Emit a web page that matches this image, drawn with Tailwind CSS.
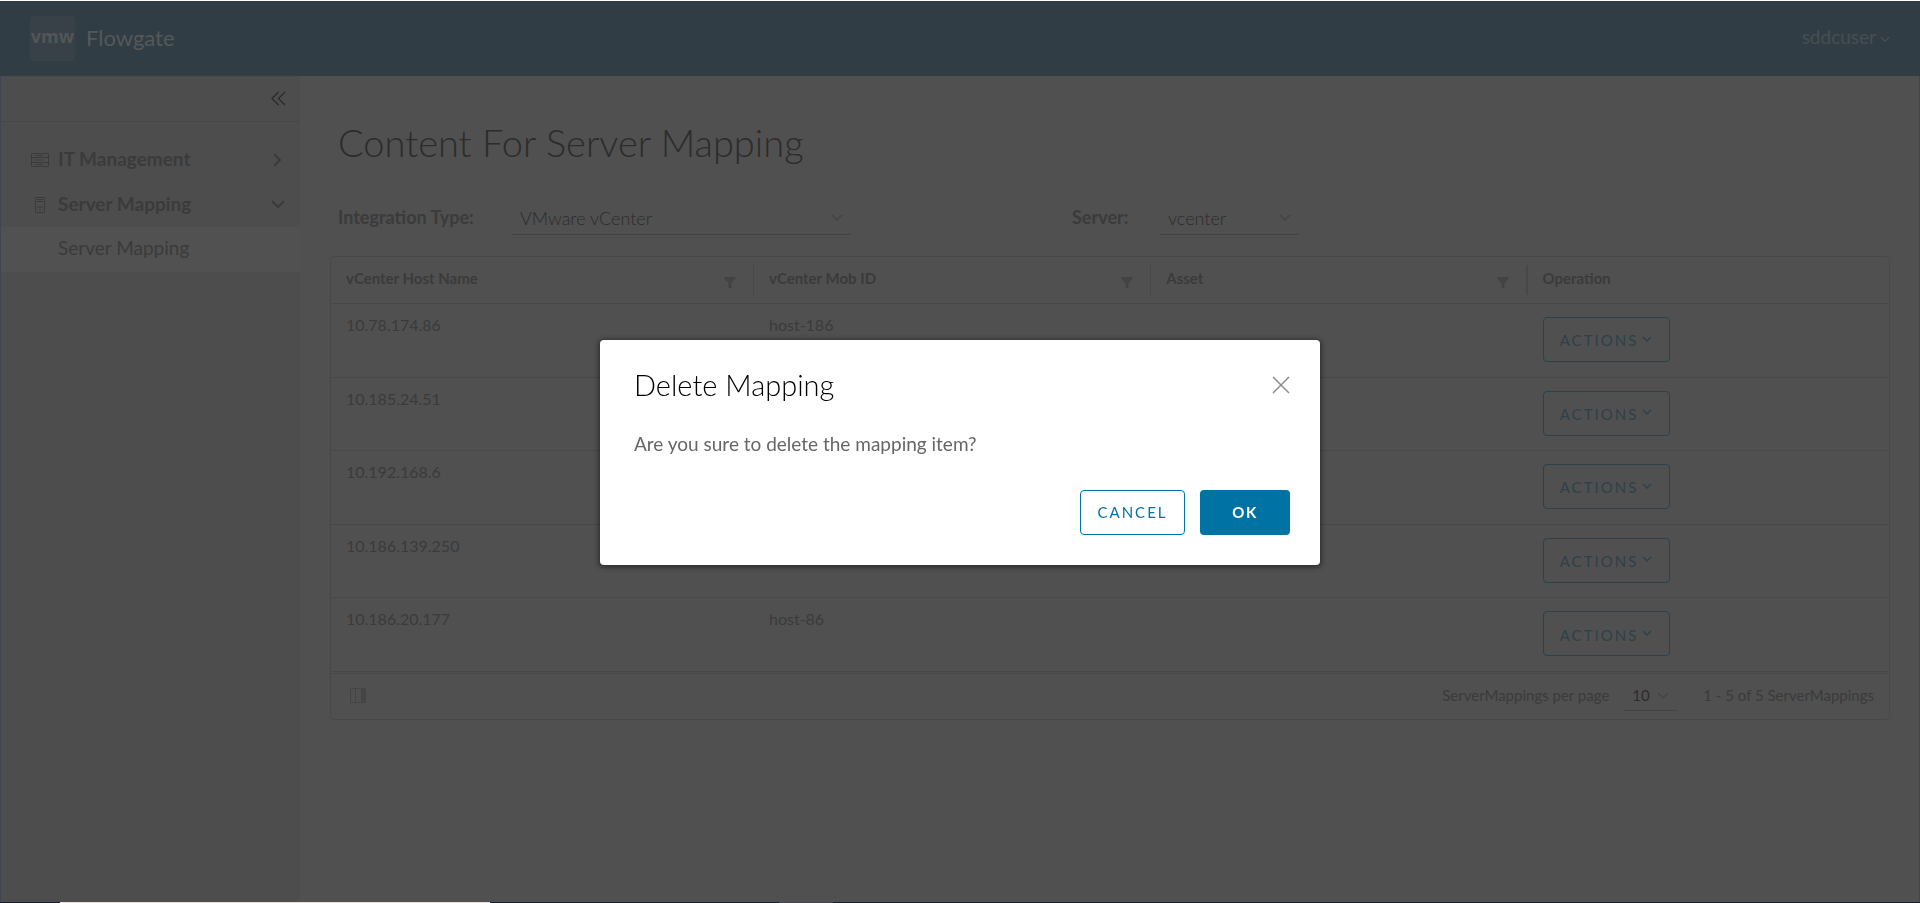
<!DOCTYPE html>
<html lang="en">
<head>
<meta charset="utf-8">
<meta name="viewport" content="width=device-width, initial-scale=1">
<title>Flowgate</title>
<script src="https://cdn.jsdelivr.net/npm/@tailwindcss/browser@4"></script>
</head>
<body class="flex min-h-screen flex-col border-t border-white bg-[#505050] font-['Lato',sans-serif] text-[#3b3b3b]">
<svg class="hidden" aria-hidden="true">
  <symbol id="chev" viewBox="0 0 12 8"><path d="M1 1l5 5 5-5" fill="none" stroke="currentColor" stroke-width="1.5"/></symbol>
  <symbol id="funnel" viewBox="0 0 12 11"><path d="M0 0h12v1L7.500 6v5h-3V6L0 1z" fill="currentColor"/></symbol>
</svg>

<header class="flex h-[75px] items-center bg-[#313d45] pl-[30px] pr-[30px]">
  <div class="flex size-[45px] items-center justify-center rounded bg-[#384147] pb-1 font-['Open_Sans',sans-serif] text-[18px] font-bold text-[#535657]">vmw</div>
  <a href="#" class="ml-[11px] pb-0.5 text-[22px] text-[#54585a]">Flowgate</a>
  <button class="ml-auto flex items-center gap-1 pb-0.5 text-[19px] text-[#474e52]">sddcuser <svg class="mt-1 h-[7px] w-[10px]"><use href="#chev"/></svg></button>
</header>

<div class="flex flex-1 border-x border-[#404554]">
  <nav class="w-[299px] shrink-0 bg-[#4d4d4d] text-[19px]">
    <div class="flex h-[46px] items-center justify-end border-b border-[#474747] pr-[14px]">
      <button aria-label="Collapse" class="text-[#2b2b2b]"><svg class="size-[15px]" viewBox="0 0 15 15" fill="none" stroke="currentColor" stroke-width="1.300"><path d="M7.500 1L1 7.500 7.500 14M14 1L7.500 7.500 14 14"/></svg></button>
    </div>
    <div class="pt-[15px]">
      <button class="flex h-[45px] w-full items-center pl-[30px] pr-[15px] font-bold">
        <svg class="mr-[9px] h-[14px] w-[18px]" viewBox="0 0 18 14" fill="none" stroke="currentColor"><path d="M.5.5h17v13H.5zM.5 4.500h17M.5 9.500h17M5 2.500h7M5 11.500h7"/><path d="M3 7h10" stroke-width="2" opacity=".5"/></svg>
        IT Management
        <svg class="ml-auto mr-[3px] h-[14px] w-[9px]" viewBox="0 0 9 14" fill="none" stroke="currentColor" stroke-width="2"><path d="M1 1l6 6-6 6"/></svg>
      </button>
      <button class="flex h-[45px] w-full items-center pl-[34px] pr-[15px] font-bold">
        <svg class="mr-[13px] h-4 w-[10px]" viewBox="0 0 10 16" fill="none" stroke="currentColor"><path d="M.5.5h9v15h-9zM2 2.500h6M2 4.500h6M4 13h2"/><path d="M2.500 10h5" stroke-width="2" opacity=".5"/></svg>
        Server Mapping
        <svg class="ml-auto h-[9px] w-[14px]" viewBox="0 0 14 9" fill="none" stroke="currentColor" stroke-width="2"><path d="M1 1l6 6 6-6"/></svg>
      </button>
      <a href="#" class="flex h-[45px] items-center bg-[#515151] pl-[57px] pb-0.5">Server Mapping</a>
    </div>
  </nav>

  <main class="min-w-0 flex-1 pt-11 pr-[29px] pl-[30px]">
    <h1 class="pl-2 text-[38px] leading-[44px] font-light text-[#2c2c2c]">Content For Server Mapping</h1>
    <form class="mt-[35px] flex h-[36px] items-center pl-2 text-[18px]">
      <label for="type" class="w-[174px] font-bold">Integration Type:</label>
      <div class="relative w-[339px]">
        <select id="type" class="h-[36px] w-full appearance-none border-b border-[#444] pl-2 pt-1 font-light text-[#2c2c2c]"><option>VMware vCenter</option></select>
        <svg class="pointer-events-none absolute right-2 top-[15px] h-2 w-3 text-[#444]"><use href="#chev"/></svg>
      </div>
      <label for="server" class="ml-[221px] w-[88px] font-bold">Server:</label>
      <div class="relative w-[139px]">
        <select id="server" class="h-[36px] w-full appearance-none border-b border-[#444] pl-2 pt-1 font-light text-[#2c2c2c]"><option>vcenter</option></select>
        <svg class="pointer-events-none absolute right-2 top-[15px] h-2 w-3 text-[#444]"><use href="#chev"/></svg>
      </div>
    </form>

    <section class="mt-[21px] rounded border border-[#484848]">
      <table class="h-[415px] w-full table-fixed border-separate border-spacing-0 text-left">
        <thead>
          <tr class="h-[47px] text-[15px]">
            <th class="w-[27.15%] border-b border-[#484848] p-0"><div class="flex h-[30px] items-center border-r border-[#484848] pr-[17px] pb-1 pl-[15px]">vCenter Host Name<button type="button" aria-label="Filter host name" class="ml-auto mt-2 text-[#434343]"><svg class="h-[11px] w-3"><use href="#funnel"/></svg></button></div></th>
            <th class="w-[25.5%] border-b border-[#484848] p-0"><div class="flex h-[30px] items-center border-r border-[#484848] pr-[17px] pb-1 pl-[15px]">vCenter Mob ID<button type="button" aria-label="Filter Mob ID" class="ml-auto mt-2 text-[#434343]"><svg class="h-[11px] w-3"><use href="#funnel"/></svg></button></div></th>
            <th class="w-[24.15%] border-b border-[#484848] p-0"><div class="flex h-[30px] items-center border-r-2 border-[#484848] pr-[17px] pb-1 pl-[15px]">Asset<button type="button" aria-label="Filter asset" class="ml-auto mt-2 text-[#434343]"><svg class="h-[11px] w-3"><use href="#funnel"/></svg></button></div></th>
            <th class="border-b border-[#484848] p-0"><div class="flex h-[30px] items-center pb-1 pl-[15px]">Operation</div></th>
          </tr>
        </thead>
        <tbody id="rows"></tbody>
      </table>
      <footer class="mt-px flex h-[46px] items-center border-t border-[#484848] pr-[15px] pb-0.5 pl-[19px] text-[15px]">
        <button aria-label="Columns" class="text-[#454545]"><svg class="h-[15px] w-4" viewBox="0 0 16 15"><path d="M.5.5h15v14H.5zM5.500.5v14" fill="none" stroke="currentColor"/><path d="M11 0h5v15h-5z" fill="currentColor"/></svg></button>
        <label for="size" class="ml-auto mr-[15px]">ServerMappings per page</label>
        <div class="relative mr-[26px] w-[53px]">
          <select id="size" class="h-[30px] w-full appearance-none border-b border-[#444] pl-2 text-[#2c2c2c]"><option>10</option></select>
          <svg class="pointer-events-none absolute right-2 top-[11px] h-2 w-3 text-[#444]"><use href="#chev"/></svg>
        </div>
        <span>1 - 5 of 5 ServerMappings</span>
      </footer>
    </section>
  </main>
</div>

<div class="flex h-px bg-[#1a1d2b]"><span class="ml-[60px] w-[430px] bg-[#e6e0df]"></span><span class="ml-[289px] w-[54px] bg-[#45454d]"></span></div>

<div class="fixed inset-0 flex items-center justify-center pt-0.5">
  <div role="dialog" aria-labelledby="dlg" class="flex w-[720px] flex-col rounded bg-white pt-[27px] pr-[30px] pb-[30px] pl-[34px] shadow-[0_1px_4px_2px_rgba(30,30,30,0.6)]">
    <div class="flex items-center justify-between">
      <h2 id="dlg" class="text-[29px] leading-9 font-light text-black">Delete Mapping</h2>
      <button aria-label="Close" class="text-[#8c8c8c]"><svg class="size-[18px]" viewBox="0 0 18 18" fill="none" stroke="currentColor" stroke-width="1.500"><path d="M1 1l16 16M17 1L1 17"/></svg></button>
    </div>
    <p class="mt-[29px] text-[19px] leading-6 text-[#666]">Are you sure to delete the mapping item?</p>
    <div class="mt-[34px] flex justify-end gap-[15px]">
      <button class="h-[45px] w-[105px] rounded border border-[#0072a3] text-[15px] tracking-[2px] text-[#0072a3]">CANCEL</button>
      <button class="h-[45px] w-[90px] rounded bg-[#0072a3] text-[15px] font-bold tracking-widest text-white">OK</button>
    </div>
  </div>
</div>

<template id="row">
  <tr class="align-top">
    <td class="border-b border-[#484848] px-[15px] pt-[9px]"></td>
    <td class="border-b border-[#484848] px-[15px] pt-[9px]"></td>
    <td class="border-b border-[#484848] px-[15px] pt-[9px]"></td>
    <td class="border-b border-[#484848] px-[15px] pt-[13px] pb-[14px]"><button class="flex h-[45px] w-[127px] items-center justify-center gap-1 rounded border border-[#2e404a] pt-0.5 text-[15px] tracking-[2px] text-[#2e404a]">ACTIONS <svg class="mb-0.5 h-2 w-[10px]" viewBox="0 0 10 8" fill="none" stroke="currentColor" stroke-width="1.500"><path d="M1 1l4 4 4-4"/></svg></button></td>
  </tr>
</template>
<script>
const hosts = [['10.78.174.86', 'host-186'], ['10.185.24.51', ''], ['10.192.168.6', ''], ['10.186.139.250', ''], ['10.186.20.177', 'host-86']];
for (const [name, mob] of hosts) {
  const row = document.getElementById('row').content.cloneNode(true);
  const cells = row.querySelectorAll('td');
  cells[0].textContent = name;
  cells[1].textContent = mob;
  document.getElementById('rows').append(row);
}
</script>
</body>
</html>
